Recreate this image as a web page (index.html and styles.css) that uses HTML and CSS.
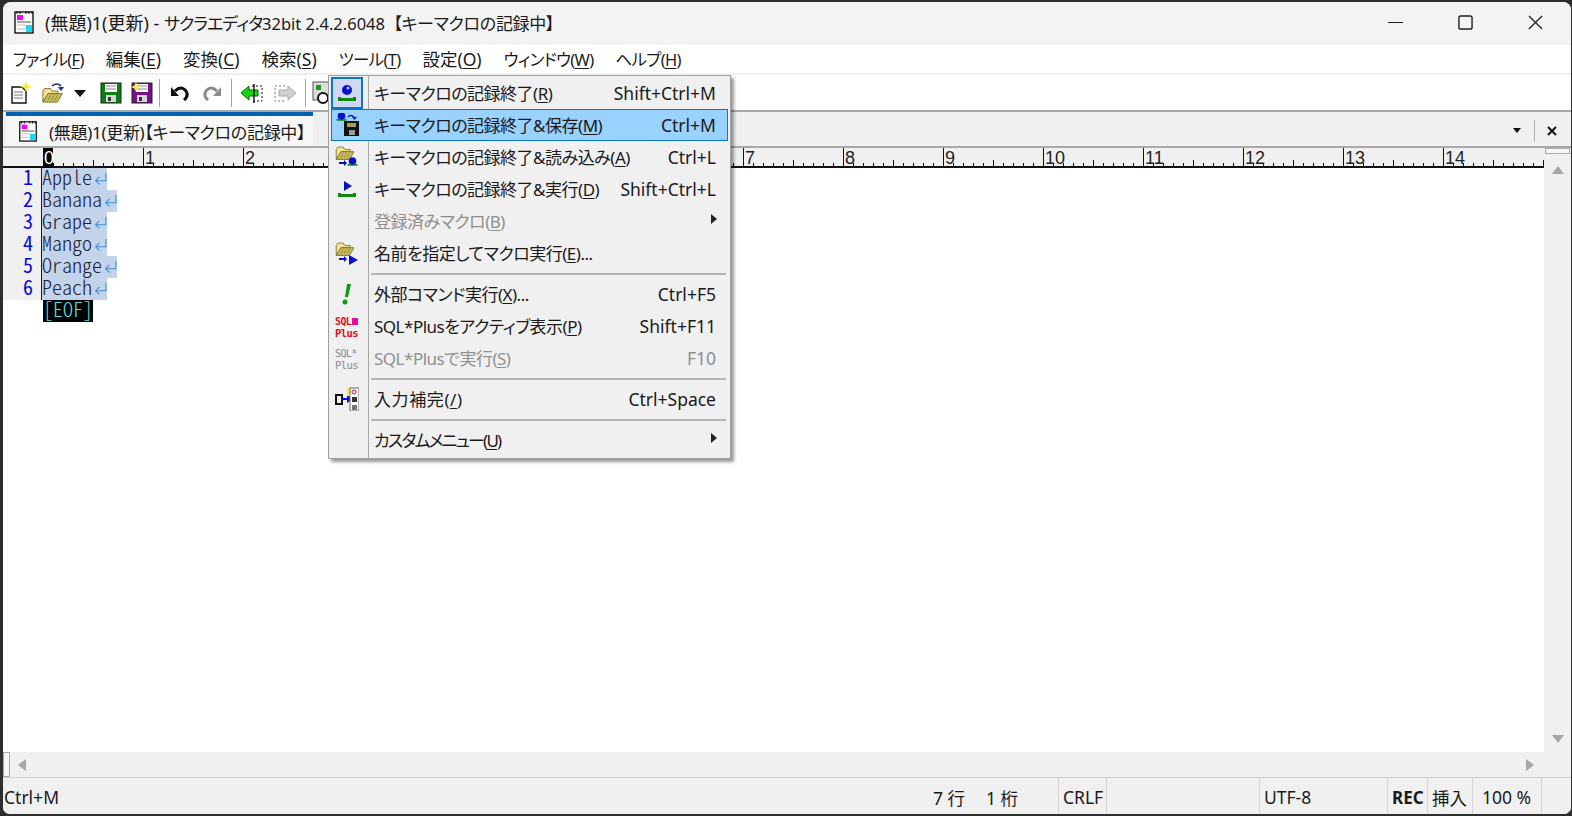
FILE: index.html
```html
<!DOCTYPE html>
<html lang="ja">
<head>
<meta charset="utf-8">
<title>サクラエディタ</title>
<link rel="stylesheet" href="styles.css">
</head>
<body>
<svg class="defs" width="0" height="0">
  <defs>
    <symbol id="page" viewBox="0 0 24 24">
      <rect x="3" y="2" width="18" height="21" fill="#fff" stroke="#111" stroke-width="1.4"/>
      <path d="M5 1v3M8 1v3M14 1v3M17 1v3M20 1v3" stroke="#111" stroke-width="1"/>
      <rect x="5" y="5" width="6" height="5" fill="#f0f"/>
      <path d="M5 12h14" stroke="#aaa" stroke-width="2"/>
      <path d="M5 15h9M5 19h8" stroke="#bbb" stroke-width="1"/>
      <rect x="14" y="15" width="6" height="7" fill="#19d9ea"/>
    </symbol>
    <symbol id="floppy" viewBox="0 0 22 22">
      <rect x="1" y="1" width="20" height="20" fill="currentColor" stroke="#222" stroke-width="1"/>
      <rect x="5" y="2" width="12" height="8" fill="#fff"/>
      <path d="M6 4h10M6 7h10" stroke="#888" stroke-width="1"/>
      <rect x="6" y="13" width="10" height="7" fill="#d8d8d8"/>
      <rect x="8" y="15" width="3" height="4" fill="#333"/>
    </symbol>
    <symbol id="folder" viewBox="0 0 26 22">
      <path d="M1 7l2-3h7l2 3h7v3H8L1 19z" fill="#f5e58a" stroke="#6b6326"/>
      <path d="M1 20l6-10h17l-6 10z" fill="#c8bb5a" stroke="#6b6326"/>
      <path d="M7 18l3-6M11 18l3-6M15 18l3-6" stroke="#8d8438" stroke-width="1"/>
    </symbol>
    <symbol id="tray" viewBox="0 0 24 24">
      <path d="M3 16v4h18v-4h-3v1H6v-1z" fill="#0a8a0a"/>
    </symbol>
    <symbol id="ret" viewBox="0 0 12 12">
      <path d="M11 1v7H1.500M5 4.500L1.500 8 5 11.500" fill="none" stroke="#3f8fdc" stroke-width="1"/>
    </symbol>
  </defs>
</svg>
<div class="window">
  <header class="titlebar">
    <svg class="appicon"><use href="#page"/></svg>
    <span class="title"><span class="t-doc">(無題)1(更新) - </span><span class="t-app">サクラエディタ</span><span class="t-ver">32bit 2.4.2.6048</span> <span class="t-rec">【キーマクロの記録中】</span></span>
    <div class="winctl">
      <svg class="winbtn" viewBox="0 0 16 16"><path d="M0 8h16" stroke="#222" stroke-width="1.300"/></svg>
      <svg class="winbtn" viewBox="0 0 16 16"><rect x="1" y="1" width="14" height="14" rx="2" fill="none" stroke="#222" stroke-width="1.500"/></svg>
      <svg class="winbtn" viewBox="0 0 16 16"><path d="M1 1l14 14M15 1L1 15" stroke="#222" stroke-width="1.400"/></svg>
    </div>
  </header>
  <nav class="menubar">
    <span class="kana">ファイル(<u>F</u>)</span>
    <span>編集(<u>E</u>)</span>
    <span>変換(<u>C</u>)</span>
    <span>検索(<u>S</u>)</span>
    <span class="kana open">ツール(<u>T</u>)</span>
    <span>設定(<u>O</u>)</span>
    <span class="kana">ウィンドウ(<u>W</u>)</span>
    <span class="kana">ヘルプ(<u>H</u>)</span>
  </nav>
  <div class="toolbar">
    <svg class="tb w24" viewBox="0 0 24 24">
      <path d="M4 6h10l4 4v12H4z" fill="#fff" stroke="#111" stroke-width="1.400"/>
      <path d="M6 11h9M6 14h9M6 17h9" stroke="#777"/>
      <path d="M18 0l1.500 4L24 5.500 19.500 7 18 11 16.500 7 12 5.500 16.500 4z" fill="#f4ec3c"/>
    </svg>
    <svg class="tb w24 g1" viewBox="0 0 24 24">
      <use href="#folder" x="0" y="4" width="22" height="19"/>
      <path d="M10 5q5-4 9 0" fill="none" stroke="#1a2f8a" stroke-width="1.600"/>
      <path d="M16 6h6l-3 4z" fill="#1a2f8a"/>
    </svg>
    <svg class="tb w12 g2" viewBox="0 0 12 8"><path d="M0 1h12L6 8z" fill="#111"/></svg>
    <svg class="tb w22 floppy-g g3"><use href="#floppy"/></svg>
    <svg class="tb w22 floppy-p g4" viewBox="0 0 22 22">
      <use href="#floppy" width="22" height="22"/>
      <path d="M5 0l1.500 3.500L10 5 6.500 6.500 5 10 3.500 6.500 0 5l3.500-1.500z" fill="#f6ee4a"/>
    </svg>
    <i class="tbsep s1"></i>
    <svg class="tb w20 g5" viewBox="0 0 20 18">
      <path d="M5 7q6-6 11 0q3 5-2 9" fill="none" stroke="#111" stroke-width="3"/>
      <path d="M1 3v9h8z" fill="#111"/>
    </svg>
    <svg class="tb w20 g6" viewBox="0 0 20 18">
      <path d="M15 7q-6-6-11 0q-3 5 2 9" fill="none" stroke="#8c8c8c" stroke-width="3"/>
      <path d="M19 3v9h-8z" fill="#8c8c8c"/>
    </svg>
    <i class="tbsep s2"></i>
    <svg class="tb w24 g7" viewBox="0 0 24 20">
      <path d="M12 3h10v15H12" fill="none" stroke="#111" stroke-dasharray="2 2"/>
      <path d="M1 10l8-7v4h9v6H9v4z" fill="#12d612" stroke="#0a6a0a"/>
      <path d="M14 1v19" stroke="#111" stroke-width="1.400"/>
    </svg>
    <svg class="tb w24 g8" viewBox="0 0 24 20">
      <path d="M12 3H2v15h10" fill="none" stroke="#777" stroke-dasharray="2 2"/>
      <path d="M23 10l-8-7v4H6v6h9v4z" fill="#d0d0d0" stroke="#aaa"/>
    </svg>
    <i class="tbsep s3"></i>
    <svg class="tb w24 g9" viewBox="0 0 24 24">
      <rect x="2" y="1" width="18" height="18" fill="#ddd" stroke="#555"/>
      <rect x="5" y="4" width="5" height="5" fill="#1a9a1a"/>
      <circle cx="12" cy="17" r="5" fill="#fff" stroke="#111" stroke-width="2"/>
    </svg>
  </div>
  <div class="tabbar">
    <div class="tab">
      <svg class="tabicon"><use href="#page"/></svg>
      <span class="tabtext">(無題)1(更新)【キーマクロの記録中】</span>
    </div>
    <div class="tabtools">
      <svg class="tabdrop" viewBox="0 0 8 5"><path d="M0 0h8L4 5z" fill="#111"/></svg>
      <i class="tabsep"></i>
      <svg class="tabclose" viewBox="0 0 10 10"><path d="M1 1l8 8M9 1L1 9" stroke="#111" stroke-width="2"/></svg>
    </div>
  </div>
  <div class="editarea">
    <div class="main">
      <div class="ruler">
        <b class="caretcol">0</b>
        <span>1</span><span>2</span><span>3</span><span>4</span><span>5</span><span>6</span><span>7</span><span>8</span><span>9</span><span>10</span><span>11</span><span>12</span><span>13</span><span>14</span>
      </div>
      <div class="code">
        <div class="line"><span class="num">1</span><span class="sel">Apple<svg class="ret"><use href="#ret"/></svg></span></div>
        <div class="line"><span class="num">2</span><span class="sel">Banana<svg class="ret"><use href="#ret"/></svg></span></div>
        <div class="line"><span class="num">3</span><span class="sel">Grape<svg class="ret"><use href="#ret"/></svg></span></div>
        <div class="line"><span class="num">4</span><span class="sel">Mango<svg class="ret"><use href="#ret"/></svg></span></div>
        <div class="line"><span class="num">5</span><span class="sel">Orange<svg class="ret"><use href="#ret"/></svg></span></div>
        <div class="line"><span class="num">6</span><span class="sel">Peach<svg class="ret"><use href="#ret"/></svg></span></div>
        <div class="eofline"><span class="eof">[EOF]</span></div>
      </div>
    </div>
    <div class="vscroll">
      <i class="splitbox"></i>
      <i class="arrow up"></i>
      <i class="arrow down"></i>
    </div>
  </div>
  <div class="hscroll">
    <i class="hsplit"></i>
    <i class="arrow left"></i>
    <i class="arrow right"></i>
  </div>
  <footer class="statusbar">
    <span class="st-msg">Ctrl+M</span>
    <span class="st-pos">7 行</span>
    <span class="st-col">1 桁</span>
    <span class="st-eol">CRLF</span>
    <span class="st-gap"></span>
    <span class="st-enc">UTF-8</span>
    <span class="st-rec">REC</span>
    <span class="st-ins">挿入</span>
    <span class="st-zoom">100 %</span>
    <span class="st-grip"></span>
  </footer>
  <div class="menu">
    <div class="mi"><span class="ic active"><svg viewBox="0 0 24 24"><use href="#tray"/><circle cx="12" cy="9" r="5" fill="#0a12c8"/><circle cx="13" cy="7" r="1.500" fill="#8fd0ff"/></svg></span><span class="lb">キーマクロの記録終了(<u>R</u>)</span><span class="sc">Shift+Ctrl+M</span></div>
    <div class="mi hl"><span class="ic"><svg viewBox="0 0 24 24"><svg x="0" y="-3" width="13" height="13" viewBox="0 0 24 24"><use href="#tray"/><circle cx="12" cy="11" r="7" fill="#0a12c8"/></svg><path d="M13 4q3-3 6 0" fill="none" stroke="#0a12c8" stroke-width="1.500"/><path d="M17 4h5l-2.500 3z" fill="#0a12c8"/><rect x="9" y="8" width="15" height="15" fill="#111"/><rect x="12" y="10" width="9" height="4" fill="#a8a05a"/><rect x="14" y="17" width="6" height="5" fill="#9a9a9a"/></svg></span><span class="lb">キーマクロの記録終了&amp;保存(<u>M</u>)</span><span class="sc">Ctrl+M</span></div>
    <div class="mi"><span class="ic"><svg viewBox="0 0 24 24"><use href="#folder" x="0" y="-1" width="21" height="17"/><path d="M4 17h5v-2l3 3-3 3v-2H4z" fill="#0a12c8"/><svg x="11" y="10" width="13" height="13" viewBox="0 0 24 24"><use href="#tray"/><circle cx="12" cy="11" r="7" fill="#0a12c8"/></svg></svg></span><span class="lb">キーマクロの記録終了&amp;読み込み(<u>A</u>)</span><span class="sc">Ctrl+L</span></div>
    <div class="mi"><span class="ic"><svg viewBox="0 0 24 24"><use href="#tray"/><path d="M9 4l8 5-8 5z" fill="#0a12c8"/></svg></span><span class="lb">キーマクロの記録終了&amp;実行(<u>D</u>)</span><span class="sc">Shift+Ctrl+L</span></div>
    <div class="mi dis"><span class="ic"></span><span class="lb">登録済みマクロ(<u>B</u>)</span><svg class="sub" viewBox="0 0 6 10"><path d="M0 0l6 5-6 5z" fill="#222"/></svg></div>
    <div class="mi"><span class="ic"><svg viewBox="0 0 24 24"><use href="#folder" x="0" y="-1" width="21" height="17"/><path d="M4 17h5v-2l3 3-3 3v-2H4z" fill="#0a12c8"/><path d="M14 14l9 5-9 5z" fill="#0a12c8"/></svg></span><span class="lb">名前を指定してマクロ実行(<u>E</u>)...</span></div>
    <i class="ms"></i>
    <div class="mi"><span class="ic"><svg viewBox="0 0 24 24"><path d="M12 2h4l-3 13h-3z" fill="#0c9a12"/><circle cx="10" cy="20" r="2.500" fill="#0c9a12"/></svg></span><span class="lb">外部コマンド実行(<u>X</u>)...</span><span class="sc">Ctrl+F5</span></div>
    <div class="mi"><span class="ic"><svg class="sql red" viewBox="0 0 24 28"><text x="0" y="13" class="sq1">SQL</text><rect x="17" y="6" width="6" height="7" fill="#e0109a"/><text x="0" y="25" class="sq2">Plus</text></svg></span><span class="lb">SQL*Plusをアクティブ表示(<u>P</u>)</span><span class="sc">Shift+F11</span></div>
    <div class="mi dis"><span class="ic"><svg class="sql grey" viewBox="0 0 24 28"><text x="0" y="13" class="sq1">SQL*</text><text x="0" y="25" class="sq2">Plus</text></svg></span><span class="lb">SQL*Plusで実行(<u>S</u>)</span><span class="sc">F10</span></div>
    <i class="ms"></i>
    <div class="mi"><span class="ic"><svg viewBox="0 0 24 24"><rect x="1" y="8" width="6" height="9" fill="none" stroke="#111" stroke-width="2"/><path d="M6 12h8" stroke="#0a12c8" stroke-width="2"/><path d="M12 8l6 4-6 4z" fill="#0a12c8"/><rect x="12" y="1" width="4" height="8" fill="#f6ee4a"/><rect x="15" y="1" width="9" height="23" fill="#fff" stroke="#666"/><circle cx="19" cy="5" r="2" fill="none" stroke="#d01010"/><rect x="17" y="10" width="5" height="5" fill="#333"/><rect x="17" y="18" width="5" height="5" fill="#777"/></svg></span><span class="lb wide">入力補完(<u>/</u>)</span><span class="sc">Ctrl+Space</span></div>
    <i class="ms"></i>
    <div class="mi"><span class="ic"></span><span class="lb tight">カスタムメニュー(<u>U</u>)</span><svg class="sub" viewBox="0 0 6 10"><path d="M0 0l6 5-6 5z" fill="#222"/></svg></div>
  </div>
</div>
</body>
</html>
```
FILE: styles.css
```css
* { box-sizing: border-box; }
html, body { margin: 0; height: 100%; }
body {
  width: 1572px;
  height: 816px;
  overflow: hidden;
  background: #2e2e2e;
  font-family: "Noto Sans", "Noto Sans CJK JP", sans-serif;
  font-feature-settings: "palt";
  color: #1a1a1a;
  font-size: 17px;
}
.defs { position: absolute; }
u { text-decoration-thickness: 1px; text-underline-offset: 2px; }
.window {
  position: relative;
  margin: 2px 1px 0 3px;
  height: 812px;
  border-radius: 8px 8px 7px 7px;
  background: #f0f0f0;
  display: flex;
  flex-direction: column;
  overflow: hidden;
}
.titlebar {
  height: 43px;
  flex: none;
  background: #f3f3f3;
  display: flex;
  align-items: center;
  padding: 0 0 3px 9px;
}
.appicon { width: 24px; height: 24px; margin-right: 9px; }
.title { white-space: pre; }
.t-doc { font-size: 18px; }
.t-app { letter-spacing: -1px; }
.t-ver { font-size: 16.500px; }
.t-rec { letter-spacing: -.3px; margin-left: 4px; }
.winctl { margin-left: auto; display: flex; align-items: center; }
.winbtn { width: 15px; height: 15px; margin-right: 55px; }
.winbtn:last-child { margin-right: 28px; }
.menubar {
  height: 28px;
  flex: none;
  background: #fff;
  display: flex;
  align-items: baseline;
  gap: 22px;
  padding: 1px 0 0 10px;
  white-space: nowrap;
  font-size: 17.500px;
}
.menubar .kana { font-size: 16.500px; letter-spacing: -.7px; }
.menubar .open { background: #fafafa; }
.toolbar {
  margin-top: 2px;
  height: 37px;
  flex: none;
  background: #fff;
  border-bottom: 2px solid #a8a8a8;
  display: flex;
  align-items: center;
  padding-left: 5px;
}
.tb { flex: none; }
.w24 { width: 24px; height: 24px; }
.w22 { width: 22px; height: 22px; }
.w20 { width: 20px; height: 18px; }
.w12 { width: 12px; height: 8px; }
.g1 { margin-left: 10px; }
.g2 { margin-left: 8px; }
.g3 { margin-left: 14px; }
.g4 { margin-left: 9px; }
.g5 { margin-left: 10px; }
.g6 { margin-left: 12px; }
.g7 { margin-left: 8px; }
.g8 { margin-left: 9px; }
.g9 { margin-left: 5px; }
.floppy-g { color: #0b7d12; }
.floppy-p { color: #7a0f8c; }
.tbsep { flex: none; width: 1px; height: 28px; background: #a0a0a0; }
.s1 { margin-left: 6px; }
.s2 { margin-left: 9px; }
.s3 { margin-left: 8px; }
.tabbar {
  height: 36px;
  flex: none;
  background: #f0f0f0;
  border-bottom: 2px solid #a8a8a8;
  display: flex;
  align-items: flex-start;
  padding-left: 3px;
}
.tab {
  width: 307px;
  height: 34px;
  border-top: 4px solid #0063b1;
  background: #f6f6f6;
  display: flex;
  align-items: center;
  padding-left: 11px;
  white-space: nowrap;
}
.tabtext { letter-spacing: -.3px; }
.tabicon { width: 22px; height: 24px; margin-right: 10px; flex: none; }
.tabtools { margin-left: auto; display: flex; align-items: center; height: 34px; padding-top: 3px; }
.tabdrop { width: 8px; height: 5px; margin-right: 13px; }
.tabsep { width: 1px; height: 22px; background: #b0b0b0; margin-right: 12px; }
.tabclose { width: 10px; height: 10px; margin-right: 14px; }
.editarea { flex: 1; display: flex; min-height: 0; background: #fff; }
.main { flex: 1; min-width: 0; }
.ruler {
  height: 20px;
  background:
    linear-gradient(#111, #111) 0 100% / 100% 2px no-repeat,
    repeating-linear-gradient(90deg, #111 0 1px, transparent 1px 50px) 40px 100% / 100% 8px no-repeat,
    repeating-linear-gradient(90deg, #111 0 1px, transparent 1px 10px) 40px 100% / 100% 5px no-repeat,
    #f0f0f0;
  display: flex;
  padding-left: 40px;
  font-family: "Liberation Sans", sans-serif;
  font-size: 18px;
  line-height: 20px;
  overflow: hidden;
}
.ruler span, .caretcol { flex: none; width: 100px; font-weight: 400; padding-left: 1px; border-left: 1px solid #111; height: 18px; color: #222; }
.caretcol { position: relative; z-index: 0; color: #fff; border: 0; }
.caretcol::before { content: ""; position: absolute; z-index: -1; left: 0; top: 0; width: 10px; height: 20px; background: #000; }
.code {
  font-family: "Noto Sans CJK JP", monospace;
  font-feature-settings: "hwid";
  font-weight: 300;
  font-size: 20px;
  color: #1a2030;
}
.line, .eofline { height: 22px; line-height: 17px; display: flex; white-space: nowrap; }
.num {
  width: 39px;
  flex: none;
  background: #f0f0f0;
  border-right: 1px solid #10107a;
  color: #0a0ad8;
  font-weight: 400;
  text-align: right;
  padding-right: 8px;
}
.sel { background: #c3d3ea; display: flex; align-items: flex-start; }
.ret { width: 13px; height: 13px; margin: 4px 0 0 2px; }
.eofline { padding-left: 40px; }
.eof { background: #000; color: #5fe0e0; width: 50px; }
.vscroll {
  width: 27px;
  flex: none;
  background: #f0f0f0;
  display: flex;
  flex-direction: column;
  align-items: center;
}
.splitbox { width: 25px; height: 6px; flex: none; background: #f6f6f6; border: 1px solid #aaa; }
.arrow { display: block; flex: none; width: 0; height: 0; border-style: solid; border-color: transparent; }
.up { margin-top: 12px; border-width: 0 6px 8px; border-bottom-color: #a6a6a6; }
.down { margin-top: auto; margin-bottom: 9px; border-width: 8px 6px 0; border-top-color: #a6a6a6; }
.hscroll {
  height: 26px;
  flex: none;
  background: #f0f0f0;
  border-bottom: 1px solid #d0d0d0;
  display: flex;
  align-items: center;
}
.hsplit { width: 7px; height: 25px; background: #f6f6f6; border: 1px solid #aaa; flex: none; }
.left { margin-left: 8px; border-width: 6px 8px 6px 0; border-right-color: #a6a6a6; }
.right { margin-left: auto; margin-right: 37px; border-width: 6px 0 6px 8px; border-left-color: #a6a6a6; }
.statusbar {
  height: 36px;
  flex: none;
  display: flex;
  align-items: center;
  background: #f0f0f0;
  white-space: nowrap;
  font-size: 17.500px;
}
.statusbar span { height: 100%; display: flex; align-items: center; flex: none; border-left: 1px solid #d4d4d4; padding: 2px 0 0 4px; }
.st-msg { width: 929px; border-left: 0 !important; padding-left: 1px !important; }
.st-pos { width: 53px; border: 0 !important; padding-left: 1px !important; }
.st-col { width: 73px; border: 0 !important; padding-left: 1px !important; }
.st-eol { width: 48px; }
.st-gap { width: 153px; }
.st-enc { width: 128px; }
.st-rec { width: 40px; font-weight: 700; font-size: 17px; }
.st-ins { width: 45px; }
.st-zoom { width: 69px; padding-left: 9px !important; }
.st-grip {
  flex: 1 !important;
  background: radial-gradient(circle, #b4b4b4 1px, transparent 1.500px) 100% 100% / 4px 4px;
  background-repeat: no-repeat;
}
.menu {
  position: absolute;
  left: 325px;
  top: 73px;
  width: 403px;
  height: 384px;
  background: #f0f0f0 linear-gradient(#a8a8a8, #a8a8a8) 39px 0 / 1px 100% no-repeat;
  border: 1px solid #a0a0a0;
  box-shadow: 3px 3px 3px rgba(0, 0, 0, .4);
  padding: 1px 2px;
}
.mi { height: 32px; display: flex; align-items: center; position: relative; white-space: nowrap; }
.hl { background: #99d1ff; outline: 1px solid #0a78c8; outline-offset: -1px; }
.ic { width: 32px; height: 32px; flex: none; display: flex; align-items: center; justify-content: center; margin-right: 11px; }
.ic > svg { width: 24px; height: 24px; }
.ic > .sql { height: 28px; }
.active { background: #d0d8f4; border: 2px solid #0a78c8; }
.lb { flex: 1; letter-spacing: -.5px; padding-bottom: 2px; }
.wide { letter-spacing: .6px; }
.tight { letter-spacing: -1.800px; }
.sc { padding: 0 12px 1px 0; font-size: 17.500px; }
.dis { color: #8f8f8f; }
.sub { width: 6px; height: 10px; position: absolute; right: 11px; top: 9px; }
.ms { display: block; height: 2px; margin: 4px 2px 3px 40px; background: #b4b4b4; }
.sql text { font-family: "DejaVu Sans Mono", monospace; font-weight: 700; }
.sq1 { font-size: 10px; letter-spacing: -.6px; }
.sq2 { font-size: 10.500px; letter-spacing: -.6px; }
.red text { fill: #e01020; }
.grey text { fill: #8a8a8a; font-weight: 400; }
```
